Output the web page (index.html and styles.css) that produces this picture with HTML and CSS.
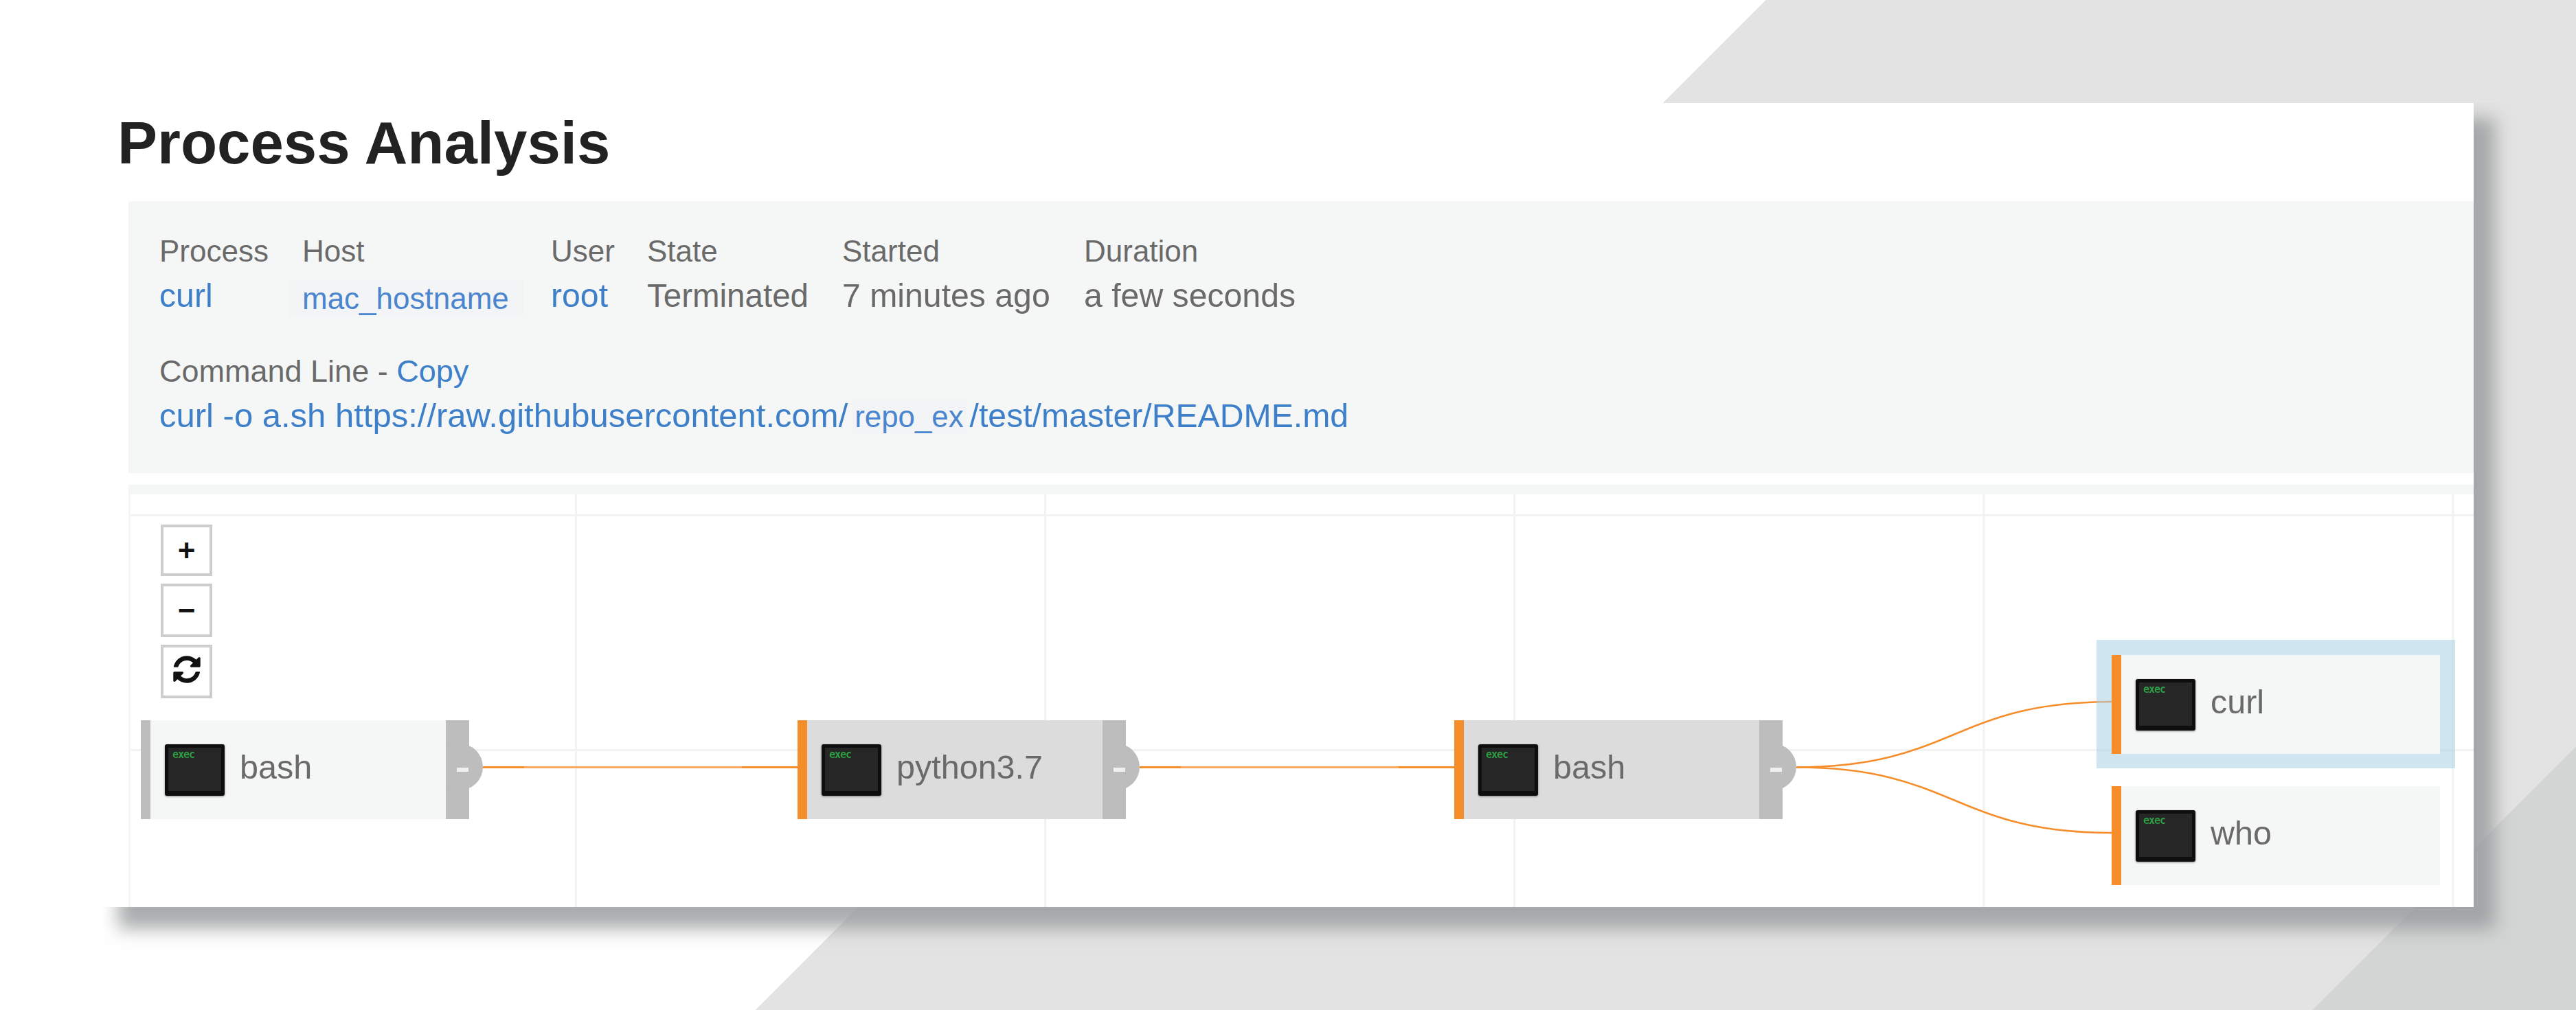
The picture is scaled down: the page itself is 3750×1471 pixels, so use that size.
FILE: index.html
```html
<!DOCTYPE html>
<html lang="en">
<head>
<meta charset="utf-8">
<title>Process Analysis</title>
<link rel="stylesheet" href="styles.css">
</head>
<body>
<div class="page">
  <main class="card">
    <h1 class="title">Process Analysis</h1>
    <section class="summary">
      <div class="facts">
        <div class="fact"><div class="label">Process</div><a class="value link">curl</a></div>
        <div class="fact"><div class="label">Host</div><a class="masked-host">mac_hostname</a></div>
        <div class="fact"><div class="label">User</div><a class="value link">root</a></div>
        <div class="fact"><div class="label">State</div><div class="value value-state">Terminated</div></div>
        <div class="fact"><div class="label">Started</div><div class="value">7 minutes ago</div></div>
        <div class="fact"><div class="label">Duration</div><div class="value">a few seconds</div></div>
      </div>
      <div class="command-label">Command Line - <a class="link">Copy</a></div>
      <div class="command"><a class="link">curl -o a.sh https://raw.githubusercontent.com/<span class="masked-repo">repo_ex</span><span class="command-tail">/test/master/README.md</span></a></div>
    </section>
    <section class="graph">
      <svg class="edges" width="3411" height="601" viewBox="0 0 3411 601">
        <g class="grid">
          <line x1="648.5" y1="0" x2="648.5" y2="601"/>
          <line x1="1331.5" y1="0" x2="1331.5" y2="601"/>
          <line x1="2014.7" y1="0" x2="2014.7" y2="601"/>
          <line x1="2697.9" y1="0" x2="2697.9" y2="601"/>
          <line x1="3381" y1="0" x2="3381" y2="601"/>
          <line x1="0" y1="30.500" x2="3411" y2="30.500"/>
          <line x1="0" y1="372.500" x2="3411" y2="372.500"/>
        </g>
        <g class="edge-light">
          <line x1="573" y1="397.500" x2="890" y2="397.500"/>
          <line x1="1529" y1="397.500" x2="1846" y2="397.500"/>
        </g>
        <g class="edge-dark">
          <line x1="513" y1="397.500" x2="573" y2="397.500"/>
          <line x1="890" y1="397.500" x2="971" y2="397.500"/>
          <line x1="1469" y1="397.500" x2="1529" y2="397.500"/>
          <line x1="1846" y1="397.500" x2="1927" y2="397.500"/>
        </g>
        <g class="edge-curve">
          <path d="M2425 397.500C2654.500 397.500 2654.500 302 2884 302"/>
          <path d="M2425 397.500C2654.500 397.500 2654.500 493 2884 493"/>
        </g>
      </svg>

      <div class="zoom-controls">
        <button class="zoom-btn zoom-in">+</button>
        <button class="zoom-btn">−</button>
        <button class="zoom-btn">
          <svg class="refresh" width="46" height="46" viewBox="0 0 1792 1792"><path d="M1639 1056q0 5-1 7-64 268-268 434.500t-478 166.500q-146 0-282.500-55t-243.500-157l-129 129q-19 19-45 19t-45-19-19-45v-448q0-26 19-45t45-19h448q26 0 45 19t19 45-19 45l-137 137q71 66 161 102t187 36q134 0 250-65t186-179q11-17 53-117 8-23 30-23h192q13 0 22.500 9.500t9.500 22.500zm25-800v448q0 26-19 45t-45 19h-448q-26 0-45-19t-19-45 19-45l138-138q-148-137-349-137-134 0-250 65t-186 179q-11 17-53 117-8 23-30 23h-199q-13 0-22.500-9.500t-9.500-22.500v-7q65-268 270-434.500t480-166.500q146 0 284 55.500t245 156.500l130-129q19-19 45-19t45 19 19 45z"/></svg>
        </button>
      </div>

      <div class="selection"></div>

      <div class="node node-root at-bash-root"><span class="term"><span class="term-tag">exec</span></span><span class="node-name">bash</span><span class="handle"><span class="handle-dash"></span></span></div>
      <div class="node node-parent at-python"><span class="term"><span class="term-tag">exec</span></span><span class="node-name">python3.7</span><span class="handle"><span class="handle-dash"></span></span></div>
      <div class="node node-parent at-bash"><span class="term"><span class="term-tag">exec</span></span><span class="node-name">bash</span><span class="handle"><span class="handle-dash"></span></span></div>
      <div class="node node-leaf at-curl"><span class="term"><span class="term-tag">exec</span></span><span class="node-name">curl</span></div>
      <div class="node node-leaf at-who"><span class="term"><span class="term-tag">exec</span></span><span class="node-name">who</span></div>
    </section>
  </main>
</div>
</body>
</html>
```
FILE: styles.css
```css
* { box-sizing: border-box; }

html, body { margin: 0; padding: 0; }

body {
  font-family: "Liberation Sans", Arial, sans-serif;
  color: #6a6a6a;
}

.page {
  width: 3750px;
  height: 1471px;
  overflow: hidden;
  padding: 150px 0 0 151px;
  background: linear-gradient(135deg, #fff 1817.3px, #e3e3e3 1817.3px, #e3e3e3 3420.3px, #d3d4d4 3420.3px);
}

.card {
  width: 3450px;
  height: 1171px;
  background: #fff;
  box-shadow: 26px 27px 24px 5px rgba(150, 153, 154, 0.8);
  clip-path: inset(0 -100px -100px 0);
}

.title {
  margin: 0 0 35px 20px;
  padding-top: 8px;
  font-size: 87px;
  line-height: 100px;
  font-weight: 700;
  color: #222;
}

.summary {
  margin-left: 36px;
  height: 396px;
  padding: 43px 0 0 45px;
  background: #f5f7f6;
}

.facts {
  display: grid;
  grid-template-columns: 208px 362px 140px 284px 352px auto;
}

.label {
  font-size: 44px;
  line-height: 60px;
}

.value {
  display: block;
  font-size: 48.200px;
  line-height: 69px;
}

.value-state { font-size: 47.500px; }

.link { color: #3d7fc9; }

.masked-host {
  display: inline-block;
  margin: 11px 0 0 -19px;
  padding: 0 21px 0 19px;
  font-size: 44px;
  line-height: 55px;
  color: #4a85cf;
  background: #f3f4f5;
}

.command-label {
  margin-top: 46px;
  font-size: 45px;
  line-height: 60px;
}

.command {
  font-size: 49px;
  line-height: 68px;
  white-space: nowrap;
}

.masked-repo {
  margin: 0 5px 0 7px;
  padding: 2px 4px 2px 3px;
  font-size: 43.800px;
  color: #4a85cf;
  background: #f3f4f5;
}

.command-tail { font-size: 48.200px; }

.graph {
  position: relative;
  height: 615px;
  margin: 17px 0 0 36px;
  border-top: 14px solid #f5f7f6;
  border-left: 3px solid #f5f7f6;
  background: #fff;
}

.edges {
  position: absolute;
  left: 0;
  top: 0;
  display: block;
}

.grid line { stroke: #f2f2f2; stroke-width: 3; }
.edge-light line { stroke: #f9a863; stroke-width: 3; }
.edge-dark line { stroke: #f68d2b; stroke-width: 3; }
.edge-curve path { fill: none; stroke: #f68d2b; stroke-width: 2.500; }

.zoom-controls {
  position: absolute;
  left: 44px;
  top: 44px;
  display: flex;
  flex-direction: column;
  gap: 11px;
}

.zoom-btn {
  display: flex;
  align-items: center;
  justify-content: center;
  width: 75px;
  height: 78px;
  padding: 0;
  border: 4px solid #cdcdcd;
  border-radius: 0;
  background: #fff;
  font-family: "Liberation Sans", Arial, sans-serif;
  font-size: 44px;
  font-weight: 700;
  line-height: 1;
  color: #111;
}

.zoom-in { height: 75px; }

.refresh {
  display: block;
  margin-top: -6px;
  fill: #111;
}

.selection {
  position: absolute;
  left: 2862px;
  top: 212px;
  width: 522px;
  height: 187px;
  background: rgba(168, 208, 226, 0.55);
}

.node {
  position: absolute;
  display: flex;
  align-items: center;
  width: 478px;
  height: 144px;
  padding-left: 21px;
  border-left: 14px solid #f68d2b;
  background: #f5f7f6;
}

.node-root { border-left-color: #bdbdbd; }
.node-parent { background: #dcdcdc; }

.at-bash-root { left: 15px; top: 329px; }
.at-python { left: 971px; top: 329px; }
.at-bash { left: 1927px; top: 329px; }
.at-curl { left: 2884px; top: 234px; }
.at-who { left: 2884px; top: 425px; }

.term {
  position: relative;
  flex: none;
  width: 87px;
  height: 75px;
  border: 5px solid #0e0e0e;
  border-bottom-width: 7px;
  border-radius: 3px;
  background: #262626;
  box-shadow: 0 1px 3px rgba(0, 0, 0, 0.45);
  filter: blur(0.7px);
}

.term-tag {
  position: absolute;
  left: 6px;
  top: 2px;
  font-family: "DejaVu Sans Mono", monospace;
  font-size: 15px;
  font-weight: 700;
  line-height: 16px;
  letter-spacing: -1px;
  color: #2f9e44;
}

.node-name {
  margin: 0 0 7px 22px;
  font-size: 48.500px;
  line-height: 1.117;
  color: #6a6a6a;
}

.handle {
  position: absolute;
  right: 0;
  top: 0;
  bottom: 0;
  width: 34px;
  background: #bdbdbd;
}

.handle::after {
  content: "";
  position: absolute;
  left: -14px;
  top: 34px;
  width: 68px;
  height: 68px;
  border-radius: 50%;
  background: #bdbdbd;
  clip-path: inset(0 0 0 14px);
}

.handle-dash {
  position: absolute;
  z-index: 1;
  left: 16px;
  top: 69px;
  width: 17px;
  height: 6px;
  background: #f0f0f0;
}
```
